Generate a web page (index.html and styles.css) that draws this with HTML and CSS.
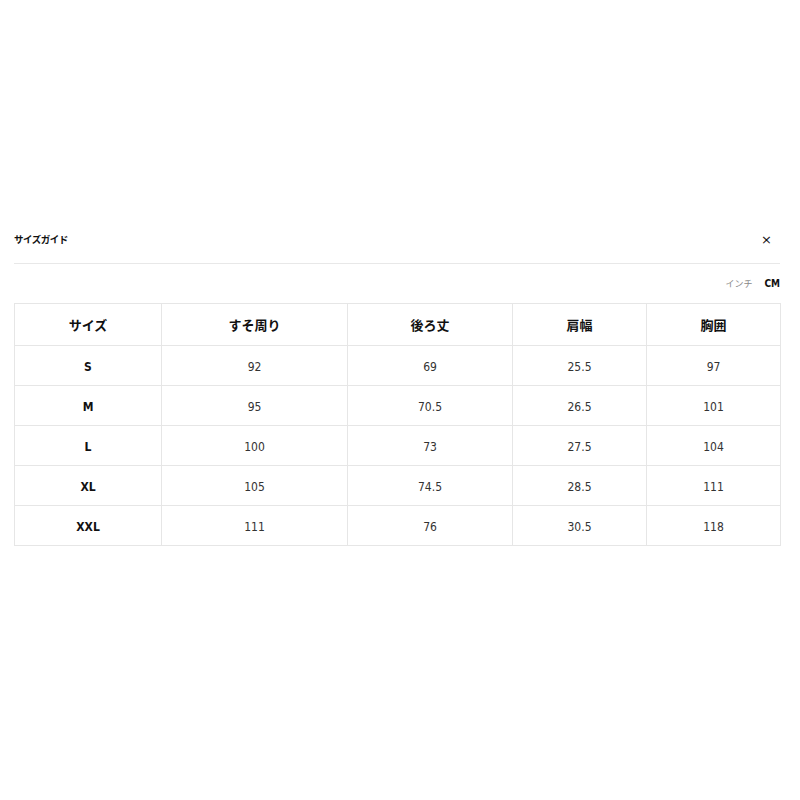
FILE: index.html
```html
<!DOCTYPE html>
<html lang="ja">
<head>
<meta charset="utf-8">
<link rel="stylesheet" href="styles.css">
</head>
<body>
<div class="modal">
  <div class="head">
    <span class="title">サイズガイド</span>
    <span class="close">×</span>
  </div>
  <div class="units">
    <span class="unit">インチ</span>
    <span class="unit active">CM</span>
  </div>
  <table class="sizes">
    <colgroup>
      <col class="c1"><col class="c2"><col class="c3"><col class="c4"><col class="c5">
    </colgroup>
    <thead>
      <tr><th>サイズ</th><th>すそ周り</th><th>後ろ丈</th><th>肩幅</th><th>胸囲</th></tr>
    </thead>
    <tbody>
      <tr><th>S</th><td>92</td><td>69</td><td>25.5</td><td>97</td></tr>
      <tr><th>M</th><td>95</td><td>70.5</td><td>26.5</td><td>101</td></tr>
      <tr><th>L</th><td>100</td><td>73</td><td>27.5</td><td>104</td></tr>
      <tr><th>XL</th><td>105</td><td>74.5</td><td>28.5</td><td>111</td></tr>
      <tr><th>XXL</th><td>111</td><td>76</td><td>30.5</td><td>118</td></tr>
    </tbody>
  </table>
</div>
</body>
</html>
```

FILE: styles.css
```css
html, body {
  margin: 0;
  padding: 0;
  background: #fff;
}
body {
  font-family: "DejaVu Sans Condensed", "Noto Sans CJK JP", sans-serif;
  color: #111;
}
.modal {
  width: 766px;
  margin: 0 0 0 14px;
  padding-top: 228px;
}
.head {
  display: flex;
  justify-content: space-between;
  align-items: center;
  height: 22px;
  padding-bottom: 13px;
  border-bottom: 1px solid #e8e8e8;
}
.title {
  font-family: "Noto Sans CJK JP", sans-serif;
  font-size: 9.5px;
  font-weight: 700;
  letter-spacing: -0.5px;
}
.close {
  font-family: "DejaVu Sans", sans-serif;
  font-size: 13px;
  margin-right: 8px;
}
.units {
  display: flex;
  justify-content: flex-end;
  align-items: center;
  gap: 12px;
  height: 18px;
  margin-top: 10px;
  margin-bottom: 11px;
}
.unit {
  font-family: "Noto Sans CJK JP", sans-serif;
  font-size: 9px;
  color: #888;
}
.unit.active {
  font-family: "DejaVu Sans Condensed", sans-serif;
  font-weight: 700;
  color: #111;
  font-size: 10px;
}
.sizes {
  width: 766px;
  border-collapse: collapse;
  table-layout: fixed;
}
.c1 { width: 147px; }
.c2 { width: 186px; }
.c3 { width: 165px; }
.c4 { width: 134px; }
.c5 { width: 134px; }
.sizes th, .sizes td {
  border: 1px solid #e6e6e6;
  text-align: center;
  padding: 0;
}
.sizes thead th {
  height: 41px;
  font-family: "Noto Sans CJK JP", sans-serif;
  font-size: 13px;
  font-weight: 700;
}
.sizes tbody th, .sizes tbody td {
  height: 37px;
  padding-top: 2px;
  font-size: 12px;
}
.sizes tbody th {
  font-weight: 700;
}
.sizes tbody td {
  color: #333;
  font-weight: 400;
}
```
